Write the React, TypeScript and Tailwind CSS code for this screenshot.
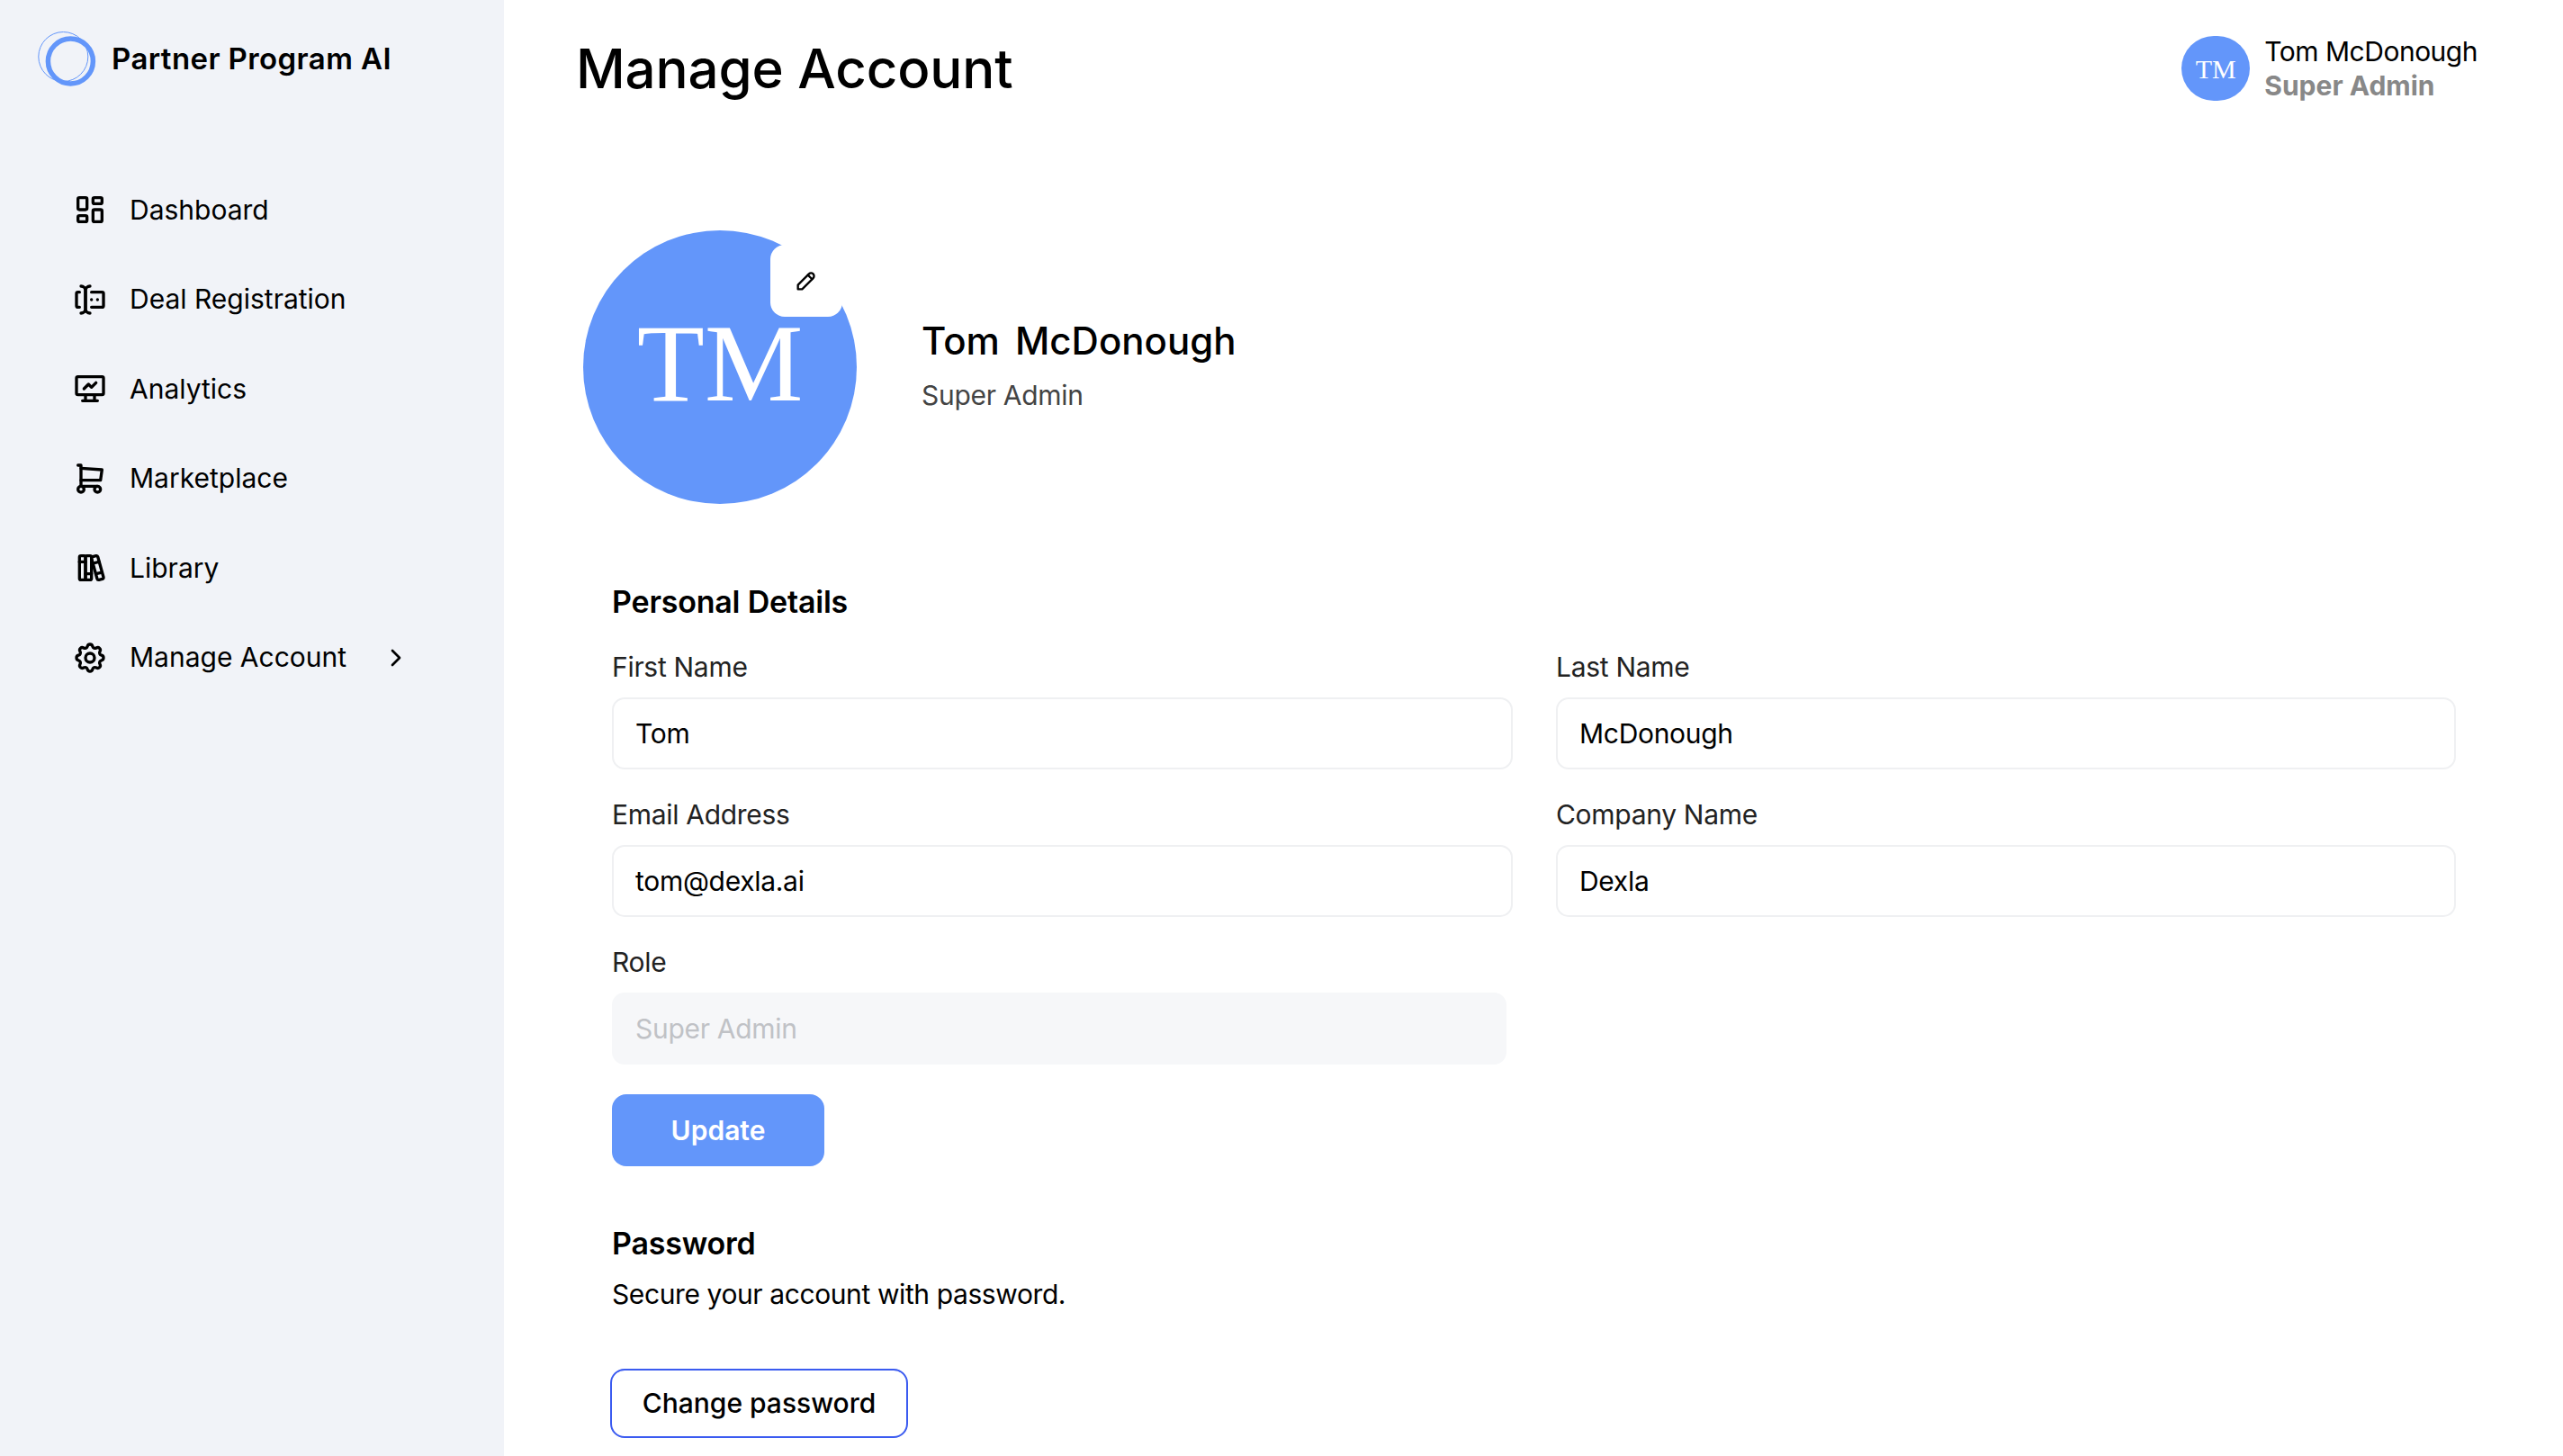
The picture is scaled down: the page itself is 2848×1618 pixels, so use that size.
import {
  TbLayoutDashboard,
  TbForms,
  TbDeviceAnalytics,
  TbShoppingCart,
  TbBooks,
  TbSettings,
  TbChevronRight,
  TbPencil,
} from 'react-icons/tb';

const NAV_ITEMS = [
  { label: 'Dashboard', icon: TbLayoutDashboard },
  { label: 'Deal Registration', icon: TbForms },
  { label: 'Analytics', icon: TbDeviceAnalytics },
  { label: 'Marketplace', icon: TbShoppingCart },
  { label: 'Library', icon: TbBooks },
  { label: 'Manage Account', icon: TbSettings, chevron: true },
];

function Logo() {
  return (
    <svg width="68" height="62" viewBox="0 0 68 62" fill="none" className="shrink-0">
      <circle cx="29.3" cy="28" r="27.5" stroke="#6396fa" strokeWidth="1" />
      <circle cx="37.4" cy="33" r="25" stroke="#6396fa" strokeWidth="5.5" />
    </svg>
  );
}

function Sidebar() {
  return (
    <aside className="w-[560px] shrink-0 bg-[#f1f3f8] h-full">
      <div className="flex items-center gap-[15px] pl-[41px] pt-[35px] h-[62px] box-content">
        <Logo />
        <span className="text-[33px] font-semibold text-black tracking-[0.4px]">Partner Program AI</span>
      </div>
      <nav className="mt-[116px] flex flex-col gap-[59.5px] pl-[80px]">
        {NAV_ITEMS.map(item => {
          const Icon = item.icon;
          return (
            <div key={item.label} className="flex items-center h-[40px]">
              <Icon size={40} color="#000" strokeWidth={2} className="shrink-0" />
              <span className="ml-[24px] text-[30px] text-black">{item.label}</span>
              {item.chevron && <TbChevronRight size={32} color="#000" className="ml-[39px]" />}
            </div>
          );
        })}
      </nav>
    </aside>
  );
}

function Field({ label, value, disabled }: { label: string; value: string; disabled?: boolean }) {
  return (
    <label className="flex flex-col gap-[16px]">
      <span className="text-[30px] leading-[36px] text-[#222] tracking-[-0.3px]">{label}</span>
      <input
        readOnly
        value={value}
        className={`h-[80px] w-full rounded-[14px] border-2 px-[24px] text-[30px] outline-none tracking-[-0.3px] ${
          disabled ? 'border-[#f6f7f9] bg-[#f6f7f9] text-[#c0c2c6]' : 'border-[#eff0f2] bg-white text-black'
        }`}
      />
    </label>
  );
}

export default function App() {
  return (
    <div className="flex w-[2848px] h-[1618px] overflow-hidden bg-white font-['Inter','Liberation_Sans',sans-serif]">
      <Sidebar />
      <main className="flex-1 pl-[80px] pr-[95px]">
        <header className="flex justify-between h-[256px]">
          <h1 className="mt-[36px] text-[60px] leading-[80px] font-medium text-black tracking-[-0.15px]">Manage Account</h1>
          <div className="flex mt-[40px] h-[72px]">
            <div className="w-[76px] h-[72px] rounded-full bg-[#6396fa] flex items-center justify-center text-white text-[30px] font-['Liberation_Serif',serif]">
              TM
            </div>
            <div className="ml-[16px] flex flex-col -mt-[2px]">
              <span className="text-[30px] leading-[38px] text-black tracking-[-0.5px]">Tom McDonough</span>
              <span className="text-[30px] leading-[38px] font-bold text-[#888]">Super Admin</span>
            </div>
          </div>
        </header>

        <section className="flex items-center pl-[8px]">
          <div className="relative w-[304px] h-[304px] rounded-full bg-[#6396fa] flex items-center justify-center text-white text-[123px] leading-none font-['Liberation_Serif',serif] pb-[10px]">
            TM
            <button className="absolute left-[208px] top-[16px] w-[80px] h-[80px] rounded-[16px] bg-white flex items-center justify-center">
              <TbPencil size={28} color="#000" />
            </button>
          </div>
          <div className="ml-[72px] flex flex-col -mt-[8px]">
            <span className="text-[42px] leading-[56px] font-medium text-black [word-spacing:6px]">Tom McDonough</span>
            <span className="mt-[14px] text-[30px] leading-[36px] text-[#444] tracking-[-0.3px]">Super Admin</span>
          </div>
        </section>

        <section className="pl-[40px]">
          <h2 className="mt-[85px] text-[34px] leading-[48px] font-semibold text-black tracking-[-0.2px]">Personal Details</h2>
          <div className="mt-[30px] grid grid-cols-[1001px_1000px] gap-x-[48px] gap-y-[32px]">
            <Field label="First Name" value="Tom" />
            <Field label="Last Name" value="McDonough" />
            <Field label="Email Address" value="tom@dexla.ai" />
            <Field label="Company Name" value="Dexla" />
            <div className="w-[994px]">
              <Field label="Role" value="Super Admin" disabled />
            </div>
          </div>
          <button className="mt-[33px] w-[236px] h-[80px] rounded-[16px] bg-[#6396fa] text-white text-[30px] font-semibold block">
            Update
          </button>
          <h2 className="mt-[62px] text-[34px] leading-[48px] font-semibold text-black tracking-[-0.2px]">Password</h2>
          <p className="mt-[14px] text-[30px] leading-[36px] text-black tracking-[-0.4px]">Secure your account with password.</p>
          <button className="mt-[65px] -ml-[2px] w-[331px] h-[77px] rounded-[16px] border-2 border-[#3b5bf0] bg-white text-black text-[30px] font-medium block">
            Change password
          </button>
        </section>
      </main>
    </div>
  );
}
